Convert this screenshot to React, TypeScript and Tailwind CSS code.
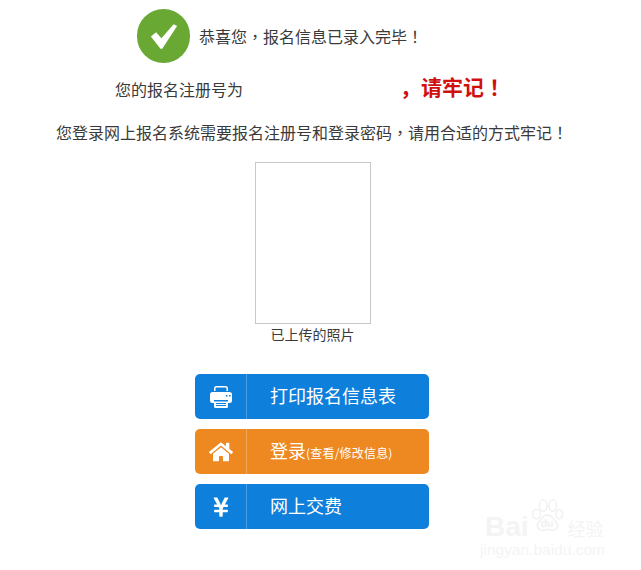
import { FaHome, FaYenSign } from "react-icons/fa";

const font = "font-['Noto_Sans_CJK_SC','Liberation_Sans',sans-serif]";

// centred full-width punctuation, as in the original font
function P({ children }: { children: React.ReactNode }) {
  return <span className="font-['Noto_Sans_CJK_TC',sans-serif]">{children}</span>;
}

function PrinterIcon() {
  return (
    <svg width="24" height="24" viewBox="0 0 24 24" fill="#ffffff">
      <path d="M5 6V3.500A2.500 2.500 0 0 1 7.500 1h9A2.500 2.500 0 0 1 19 3.500V6h-1.500V3.500a1 1 0 0 0-1-1h-9a1 1 0 0 0-1 1V6z" />
      <path d="M3.500 7h17A2.500 2.500 0 0 1 23 9.500v6a2.500 2.500 0 0 1-2.500 2.500H19v3.500a1.500 1.500 0 0 1-1.500 1.500h-11A1.500 1.500 0 0 1 5 21.500V18H3.500A2.500 2.500 0 0 1 1 15.500v-6A2.500 2.500 0 0 1 3.500 7z" />
      <rect x="5" y="15" width="14" height="1.500" fill="#0f7fdc" />
      <rect x="7" y="18" width="10" height="1" fill="#0f7fdc" />
      <rect x="7" y="20" width="10" height="1" fill="#0f7fdc" />
      <rect x="17" y="10" width="1.500" height="1.500" fill="#0f7fdc" />
      <rect x="20" y="10" width="1.500" height="1.500" fill="#0f7fdc" />
    </svg>
  );
}

function ActionButton({ icon, color, children }: { icon: React.ReactNode; color: string; children: React.ReactNode }) {
  return (
    <div className={`flex h-[45px] w-[234px] items-center rounded-[5px] text-white ${color}`}>
      <div className="flex h-full w-[52px] shrink-0 items-center justify-center border-r border-white/25">{icon}</div>
      <div className="pb-[3px] pl-[23px] text-[18px] leading-none">{children}</div>
    </div>
  );
}

function Watermark() {
  return (
    <div className="absolute left-[485px] top-[498px] w-[156px] text-[#f4f4f4] font-['Liberation_Sans',sans-serif] select-none">
      <div className="flex items-end">
        <span className="mb-[-9px] text-[28px] font-bold leading-[32px]">Bai</span>
        <svg className="ml-[1px]" width="34" height="36" viewBox="0 0 34 38" fill="none" stroke="#f0f0f0" strokeWidth="1.500">
          <ellipse cx="6" cy="17" rx="4" ry="5" />
          <ellipse cx="13" cy="8" rx="4" ry="6" />
          <ellipse cx="23" cy="8" rx="4" ry="6" />
          <ellipse cx="30" cy="17" rx="3.500" ry="5" />
          <path d="M17 18c-5 0-6 5-9 8-3 4 0 9 5 8 3-1 6-1 9 0 5 1 8-4 5-8-3-3-4-8-10-8z" />
          <text x="17" y="31" textAnchor="middle" fontSize="11" fontWeight="700" fill="#f0f0f0" stroke="none">du</text>
        </svg>
        <span className="mb-[-7px] ml-[4px] text-[18px] leading-[26px] font-['Noto_Sans_CJK_SC',sans-serif]">经验</span>
      </div>
      <div className="ml-[-5px] mt-[7px] text-[15.500px] leading-[18px]">jingyan.baidu.com</div>
    </div>
  );
}

export default function App() {
  return (
    <div className={`relative h-[570px] w-[641px] overflow-hidden bg-white text-[#3a3a3a] ${font}`}>
      <div className="flex items-center pl-[137px] pt-[9px]">
        <div className="flex h-[54px] w-[53px] items-center justify-center rounded-full bg-[#6aa834]">
          <svg width="28" height="27" viewBox="0 0 32 30" fill="#ffffff">
            <path d="M1 15l6-5 6 7L27 1l4 2-17 26h-2z" />
          </svg>
        </div>
        <span className="ml-[9px] text-[16px] leading-none">恭喜您<P>，</P>报名信息已录入完毕<P>！</P></span>
      </div>

      <div className="mt-[10px] flex h-[28px] items-center pl-[115px]">
        <span className="pt-[3px] text-[16px] leading-none">您的报名注册号为</span>
        <span className="ml-[157px] pb-[1px] text-[21px] font-bold leading-none text-[#cf100f]">，请牢记<P>！</P></span>
      </div>

      <p className="mt-[19px] pl-[56px] text-[16px] leading-[24px]">您登录网上报名系统需要报名注册号和登录密码<P>，</P>请用合适的方式牢记<P>！</P></p>

      <div className="mt-[18px] flex flex-col items-center pr-[16px]">
        <div className="h-[162px] w-[116px] border border-[#c8c8c8]" />
        <span className="text-[14px] leading-[20px]">已上传的照片</span>
      </div>

      <div className="mt-[30px] flex flex-col gap-[10px] pl-[195px]">
        <ActionButton color="bg-[#0f7fdc]" icon={<PrinterIcon />}>打印报名信息表</ActionButton>
        <ActionButton color="bg-[#ee8820]" icon={<FaHome size={24} />}>
          登录<span className="text-[12px] tracking-[0.2px]">(查看/修改信息)</span>
        </ActionButton>
        <ActionButton color="bg-[#0f7fdc]" icon={<FaYenSign size={22} />}>网上交费</ActionButton>
      </div>

      <Watermark />
    </div>
  );
}
